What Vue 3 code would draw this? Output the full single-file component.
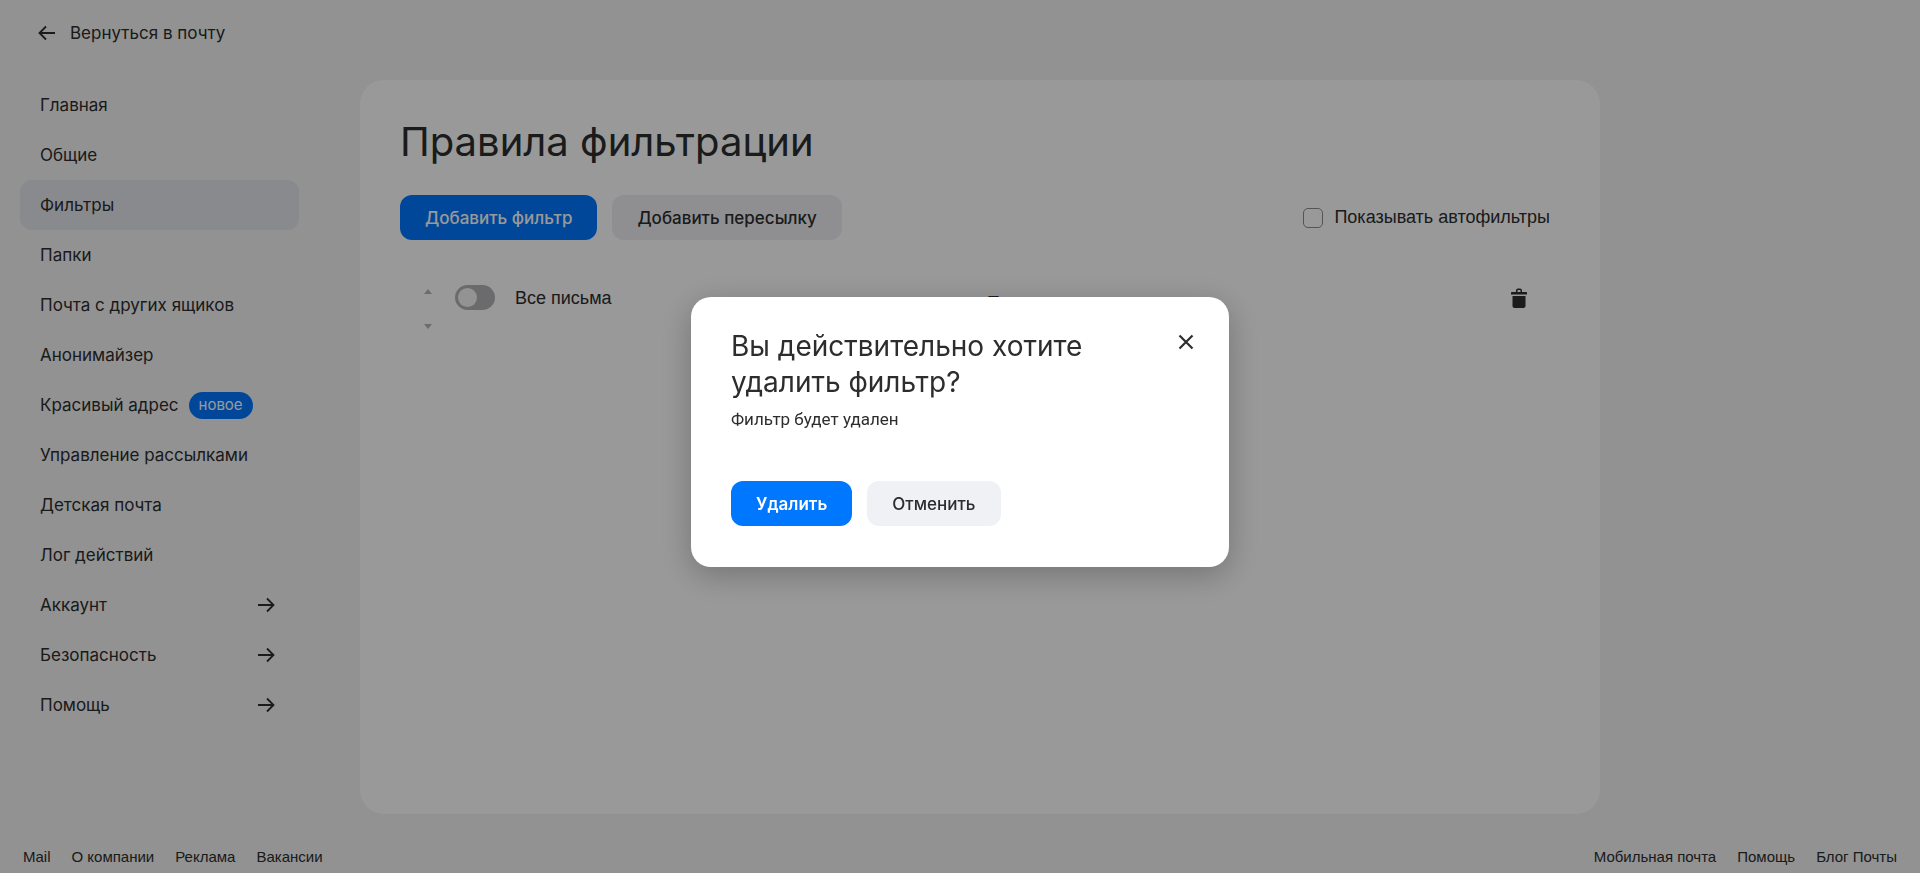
<script setup>
const menu = [
  { label: 'Главная' },
  { label: 'Общие' },
  { label: 'Фильтры', active: true },
  { label: 'Папки' },
  { label: 'Почта с других ящиков' },
  { label: 'Анонимайзер' },
  { label: 'Красивый адрес', badge: 'новое' },
  { label: 'Управление рассылками' },
  { label: 'Детская почта' },
  { label: 'Лог действий' },
  { label: 'Аккаунт', arrow: true },
  { label: 'Безопасность', arrow: true },
  { label: 'Помощь', arrow: true }
]

const footerLeft = ['Mail', 'О компании', 'Реклама', 'Вакансии']
const footerRight = ['Мобильная почта', 'Помощь', 'Блог Почты']
</script>

<template>
  <div class="page">
    <div class="content">
      <aside class="sidebar">
        <a class="back">
          <svg class="back-icon" width="18" height="16" viewBox="0 0 18 16" fill="none">
            <path d="M17 8H1.5M8 1.5 1.5 8 8 14.5" stroke="#2c2d2e" stroke-width="1.8" />
          </svg>
          Вернуться в почту
        </a>
        <nav class="menu">
          <a v-for="item in menu" :key="item.label" class="menu-item" :class="{ active: item.active }">
            <span>{{ item.label }}</span>
            <span v-if="item.badge" class="badge">{{ item.badge }}</span>
            <svg v-if="item.arrow" class="menu-arrow" width="18" height="16" viewBox="0 0 18 16" fill="none">
              <path d="M1 8h15.5M10 1.5 16.500 8 10 14.500" stroke="#2c2d2e" stroke-width="1.8" />
            </svg>
          </a>
        </nav>
      </aside>

      <main class="panel">
        <h1 class="title">Правила фильтрации</h1>
        <div class="toolbar">
          <button class="btn btn-primary">Добавить фильтр</button>
          <button class="btn btn-secondary">Добавить пересылку</button>
          <label class="auto">
            <span class="checkbox"></span>
            Показывать автофильтры
          </label>
        </div>
        <div class="filter-row">
          <div class="sort">
            <span class="tri up"></span>
            <span class="tri down"></span>
          </div>
          <span class="toggle"><span class="knob"></span></span>
          <span class="filter-name">Все письма</span>
          <div class="filter-action">
            <div>Переслать на:</div>
            <div>example.address@mail.ru</div>
          </div>
          <svg class="trash" width="16" height="20" viewBox="0 0 16 20">
            <path fill="#2c2d2e" d="M5 4V2.500C5 1.400 5.900.5 7 .5h2c1.100 0 2 .9 2 2V4h4c.6 0 1 .4 1 1v1.500H0V5c0-.6.4-1 1-1h4Zm1.500 0h3V2.500C9.500 2.200 9.300 2 9 2H7c-.3 0-.5.2-.5.5V4ZM1.500 8h13v10c0 1.100-.9 2-2 2h-9c-1.100 0-2-.9-2-2V8Z" />
          </svg>
        </div>
      </main>
    </div>

    <footer class="footer">
      <div class="footer-links">
        <a v-for="link in footerLeft" :key="link">{{ link }}</a>
      </div>
      <div class="footer-links">
        <a v-for="link in footerRight" :key="link">{{ link }}</a>
      </div>
    </footer>

    <div class="overlay">
      <div class="modal">
        <div class="modal-head">
          <h2 class="modal-title">Вы действительно хотите удалить фильтр?</h2>
          <svg class="close" width="16" height="16" viewBox="0 0 16 16" fill="none">
            <path d="M1.500 1.500l13 13M14.500 1.500l-13 13" stroke="#2c2d2e" stroke-width="2.200" />
          </svg>
        </div>
        <p class="modal-text">Фильтр будет удален</p>
        <div class="modal-actions">
          <button class="btn btn-primary btn-delete">Удалить</button>
          <button class="btn btn-cancel">Отменить</button>
        </div>
      </div>
    </div>
  </div>
</template>

<style>
html, body {
  margin: 0;
  background: #f3f3f3;
}
</style>

<style scoped>
.page {
  height: 873px;
  display: flex;
  flex-direction: column;
  overflow: hidden;
  font-family: Inter, "Noto Sans", sans-serif;
  color: #2c2d2e;
  background: #f3f3f3;
}

.content {
  display: flex;
  height: 814px;
}

.sidebar {
  width: 360px;
  flex-shrink: 0;
}

.back {
  display: flex;
  align-items: center;
  gap: 14px;
  height: 24px;
  margin: 21px 0 0 38px;
  font-size: 17px;
}

.menu {
  display: flex;
  flex-direction: column;
  margin: 35px 0 0 20px;
  width: 279px;
}

.menu-item {
  display: flex;
  align-items: center;
  height: 50px;
  padding: 0 20px;
  border-radius: 12px;
  font-size: 17px;
}

.menu-item.active {
  background: #e4e6eb;
}

.badge {
  margin-left: 10px;
  padding: 0 10px;
  height: 27px;
  line-height: 26px;
  border-radius: 14px;
  background: #0077ff;
  color: #fff;
  font-size: 15px;
}

.menu-arrow {
  margin-left: auto;
  margin-right: 4px;
}

.panel {
  width: 1240px;
  height: 734px;
  margin-top: 80px;
  padding: 0 40px;
  box-sizing: border-box;
  background: #ffffff;
  border-radius: 24px;
}

.title {
  margin: 37px 0 0;
  font-size: 40px;
  line-height: 50px;
  font-weight: 400;
}

.toolbar {
  display: flex;
  align-items: center;
  gap: 15px;
  margin-top: 28px;
}

.btn {
  height: 45px;
  padding: 0 25px;
  border: none;
  border-radius: 12px;
  font-family: inherit;
  font-size: 17px;
  font-weight: 500;
  color: #2c2d2e;
}

.btn-primary {
  background: #0077ff;
  color: #fff;
}

.btn-secondary {
  background: #eeeff3;
}

.auto {
  display: flex;
  align-items: center;
  gap: 11px;
  margin-left: auto;
  font-family: "Liberation Sans", sans-serif;
  font-size: 18px;
  margin-right: 10px;
}

.checkbox {
  width: 18px;
  height: 18px;
  border: 1px solid #8c8d90;
  border-radius: 5px;
}

.filter-row {
  display: flex;
  align-items: flex-start;
  margin-top: 45px;
  font-family: "Liberation Sans", sans-serif;
  font-size: 18px;
}

.sort {
  width: 55px;
  height: 46px;
  position: relative;
}

.tri {
  position: absolute;
  left: 24px;
  border-left: 4px solid transparent;
  border-right: 4px solid transparent;
}

.tri.up {
  top: 4px;
  border-bottom: 5px solid #b5b5b7;
}

.tri.down {
  top: 39px;
  border-top: 5px solid #b5b5b7;
}

.toggle {
  display: block;
  width: 40px;
  height: 25px;
  border-radius: 13px;
  background: #b2b3b7;
  position: relative;
}

.knob {
  position: absolute;
  left: 3px;
  top: 3px;
  width: 19px;
  height: 19px;
  border-radius: 50%;
  background: #f5f5f5;
}

.filter-name {
  margin-left: 20px;
  line-height: 26px;
  width: 472px;
}

.filter-action {
  line-height: 36px;
  width: 524px;
}

.trash {
  margin-top: 3px;
}

.footer {
  display: flex;
  justify-content: space-between;
  padding: 34px 23px 0;
  font-family: "Liberation Sans", sans-serif;
  font-size: 15px;
  line-height: 18px;
}

.footer-links {
  display: flex;
  gap: 21px;
}

.overlay {
  position: fixed;
  inset: 0;
  display: flex;
  justify-content: center;
  align-items: flex-start;
  padding-top: 297px;
  box-sizing: border-box;
  background: rgba(0, 0, 0, 0.4);
}

.modal {
  width: 538px;
  height: 270px;
  box-sizing: border-box;
  padding: 31px 40px 0;
  background: #fff;
  border-radius: 20px;
  box-shadow: 0 8px 32px rgba(0, 0, 0, 0.25);
}

.modal-head {
  display: flex;
  justify-content: space-between;
  align-items: flex-start;
}

.modal-title {
  margin: 0;
  width: 400px;
  font-size: 28px;
  line-height: 36px;
  font-weight: 400;
}

.close {
  margin: 6px -5px 0 0;
}

.modal-text {
  margin: 7px 0 0;
  font-family: Roboto, sans-serif;
  font-size: 17px;
  line-height: 24px;
}

.modal-actions {
  display: flex;
  gap: 15px;
  margin-top: 50px;
}

.btn-delete {
  font-weight: 600;
}

.btn-cancel {
  background: #f0f1f5;
}
</style>
